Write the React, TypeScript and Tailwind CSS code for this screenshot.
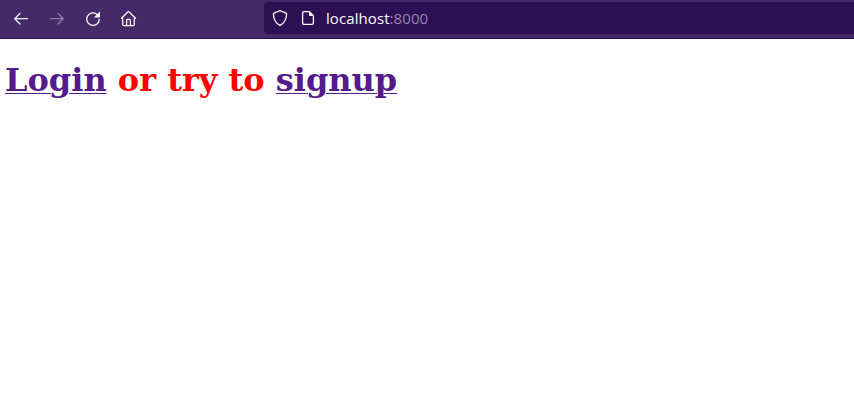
function Back({ className }: { className?: string }) {
  return (
    <svg className={className} width="16" height="16" viewBox="0 0 16 16" fill="none" stroke="currentColor" strokeWidth="1.25" strokeLinecap="round" strokeLinejoin="round">
      <path d="M14.4 7.7H1.7M7 2.4 1.7 7.7 7 13" />
    </svg>
  );
}

function Reload() {
  return (
    <svg width="16" height="16" viewBox="0 0 16 16" fill="none" stroke="currentColor" strokeWidth="1.3" strokeLinecap="round">
      <path d="M12.2 3.4A6.3 6.3 0 1 0 14.3 8.4" />
      <path d="M15 1.3V5.9a.5.5 0 0 1-.5.5H9.9a.4.4 0 0 1-.3-.7L14.3 1a.4.4 0 0 1 .7.3Z" fill="currentColor" stroke="none" />
    </svg>
  );
}

function Home() {
  return (
    <svg className="-ml-px" width="17" height="16" viewBox="0 0 17 16" fill="none" stroke="currentColor" strokeWidth="1.25" strokeLinecap="round" strokeLinejoin="round">
      <path d="M1.5 7.3 7.8 1a1 1 0 0 1 1.4 0l6.3 6.3M2.7 6.3v6.9a1.3 1.3 0 0 0 1.3 1.3h9a1.3 1.3 0 0 0 1.3-1.3V6.3" />
      <path d="M6.6 14.3V9.4a1 1 0 0 1 1-1h1.8a1 1 0 0 1 1 1v4.9" />
    </svg>
  );
}

function Shield() {
  return (
    <svg width="16" height="18" viewBox="0 0 16 18" fill="none" stroke="currentColor" strokeWidth="1.3" strokeLinejoin="round">
      <path d="M8 1.6 14 4.1a1 1 0 0 1 .6 1C14.4 10.6 12 14.6 8 16.4 4 14.6 1.6 10.6 1.4 5.1a1 1 0 0 1 .6-1Z" />
    </svg>
  );
}

function Page() {
  return (
    <svg width="14" height="16" viewBox="0 0 14 16" fill="none" stroke="currentColor" strokeWidth="1.3" strokeLinejoin="round">
      <path d="M8.3 1.6H3a1.4 1.4 0 0 0-1.4 1.4v10A1.4 1.4 0 0 0 3 14.4h8a1.4 1.4 0 0 0 1.4-1.4V5.7Z" />
      <path d="M8 1.2V5a1 1 0 0 0 1 1h3.8Z" fill="currentColor" stroke="none" />
    </svg>
  );
}

export default function App() {
  return (
    <div className="h-[403px] w-[854px] overflow-hidden bg-white">
      <header className="flex h-[39px] border-b border-[#2c1054] bg-[#452a69] text-[#fbfbfe]">
        <nav className="flex w-[264px] items-center gap-5 pl-[13px]">
          <Back />
          <Back className="-scale-x-100 opacity-40" />
          <Reload />
          <Home />
        </nav>
        <div className="mt-0.5 flex h-8 flex-1 items-center rounded-l bg-[#2d1054] pl-2">
          <Shield />
          <span className="w-[13px]" />
          <Page />
          <span className="ml-[11px] pb-px font-['Open_Sans','Noto_Sans',sans-serif] text-[15px] leading-5 tracking-[0.08px] whitespace-nowrap">
            localhost<span className="text-[#9686a8]">:8000</span>
          </span>
        </div>
      </header>
      <main className="px-[5px] pt-[22px]">
        <h1 className="font-['DejaVu_Serif',serif] text-[32px] leading-[38px] font-bold text-[#ff0000]">
          <a className="text-[#551a8b] underline decoration-1 underline-offset-2" href="#login">Login</a> or try to{" "}
          <a className="text-[#551a8b] underline decoration-1 underline-offset-2" href="#signup">signup</a>
        </h1>
      </main>
    </div>
  );
}
